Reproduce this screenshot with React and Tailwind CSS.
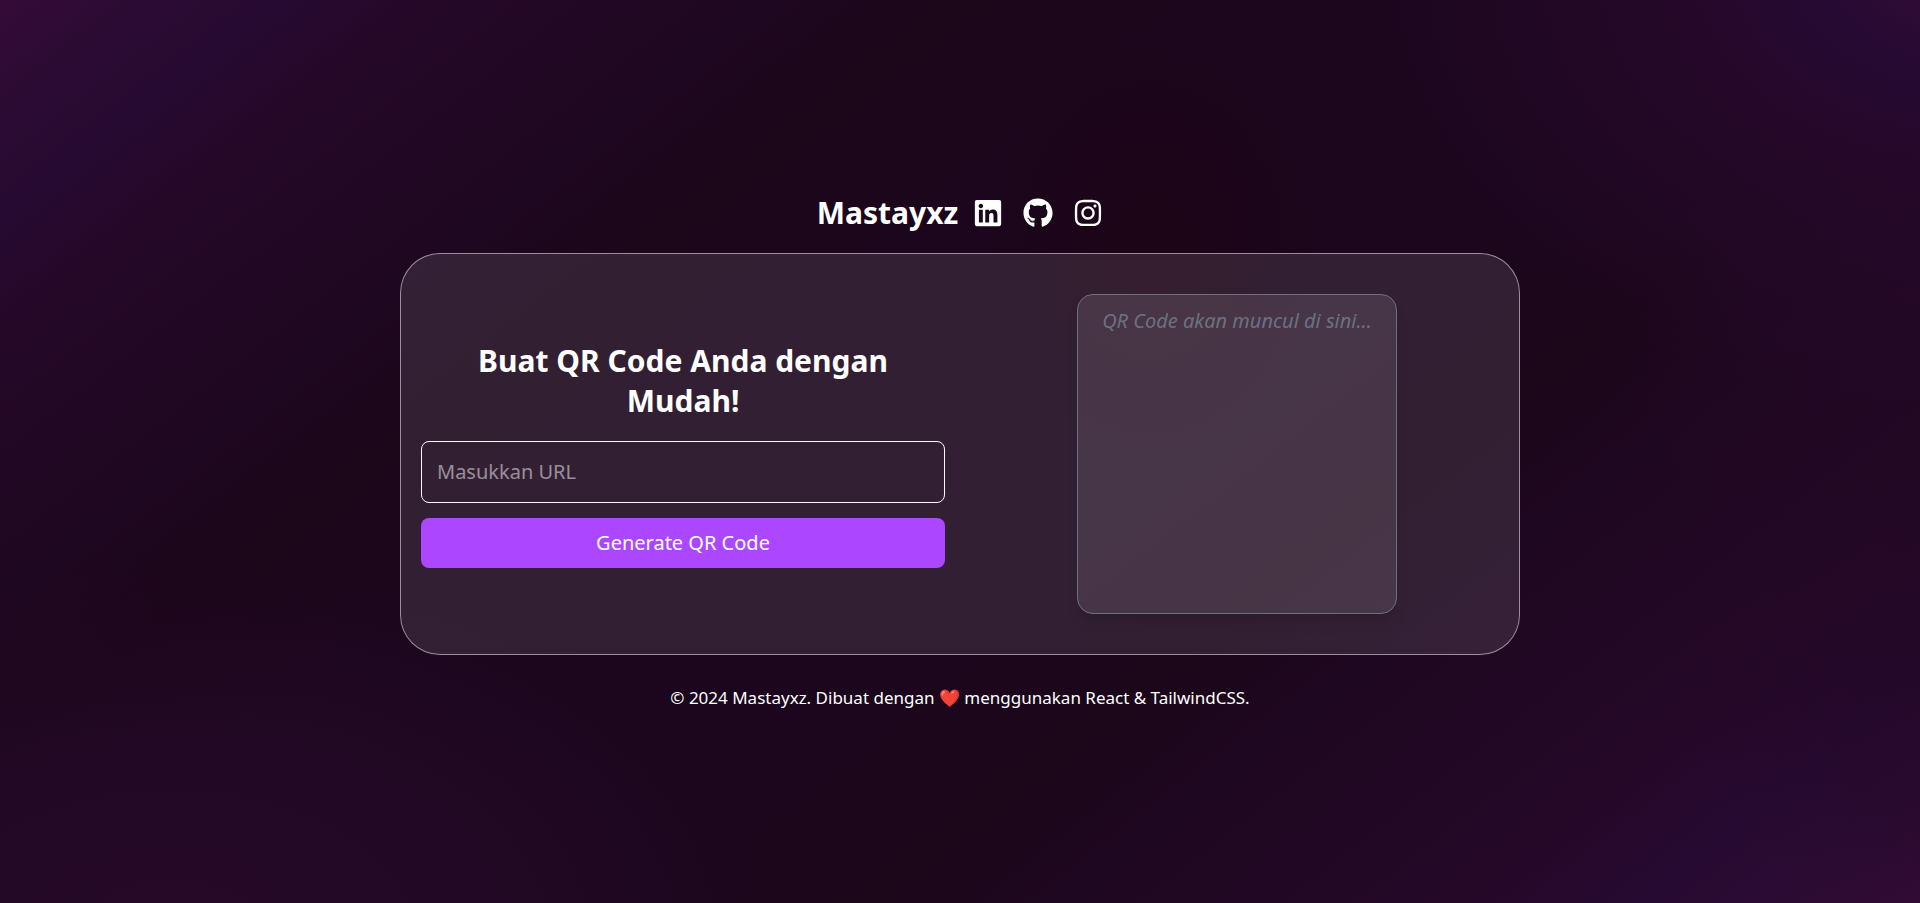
import { FaLinkedin, FaGithub, FaInstagram } from "react-icons/fa";

const socials = [
  { label: "LinkedIn", href: "#linkedin", Icon: FaLinkedin },
  { label: "GitHub", href: "#github", Icon: FaGithub },
  { label: "Instagram", href: "#instagram", Icon: FaInstagram },
];

const backdrop =
  "bg-[#1b061c] bg-[radial-gradient(ellipse_9%_24%_at_60%_27%,#1d0518_20%,#1d051800),radial-gradient(ellipse_32%_42%_at_9%_104%,#260a28,#230825_40%,#1f072200),radial-gradient(ellipse_32%_50%_at_102%_-4%,#330b36,#270a33_22%,#250829_45%,#1f072200),radial-gradient(ellipse_20%_70%_at_104%_40%,#220723,#1f072200),linear-gradient(142deg,#350b38_0%,#2c0b33_4%,#270a31_9%,#250828_14%,#210723_20%,#1e0720_25%,#1b061a_31%,#1b061d_40%,#1b061d_58%,#1b061a_66%,#1e0720_72%,#210723_78%,#250828_85%,#270a31_91%,#2c0b33_96%,#330b36_100%)]";

function Header() {
  return (
    <header className="flex items-center gap-[15px]">
      <h1 className="text-[30px] leading-[40px] font-bold">Mastayxz</h1>
      <nav className="flex items-center gap-5">
        {socials.map(({ label, href, Icon }) => (
          <a key={label} href={href} aria-label={label}>
            <Icon className="size-[30px]" />
          </a>
        ))}
      </nav>
    </header>
  );
}

function UrlForm() {
  return (
    <form className="flex flex-col" onSubmit={(e) => e.preventDefault()}>
      <h2 className="mb-5 text-center text-[30px] leading-[40px] font-bold">
        Buat QR Code Anda dengan Mudah!
      </h2>
      <input
        type="url"
        aria-label="Masukkan URL"
        placeholder="Masukkan URL"
        className="h-[62px] w-full rounded-lg border border-white px-[15px] text-xl placeholder:text-white/50"
      />
      <button className="mt-[15px] h-[50px] w-full rounded-lg bg-[#ad46ff] text-xl">
        Generate QR Code
      </button>
    </form>
  );
}

function QrPreview() {
  return (
    <div className="mx-auto h-80 w-80 rounded-2xl border border-[#6a7282] bg-white/10 p-3 text-center shadow-lg">
      <p className="text-xl text-[#6a7282] italic">QR Code akan muncul di sini...</p>
    </div>
  );
}

export default function App() {
  return (
    <div
      className={`flex min-h-screen flex-col items-center justify-center font-['Noto_Sans',sans-serif] text-white ${backdrop}`}
    >
      <Header />
      <main className="mt-5 grid w-7/12 grid-cols-2 items-center gap-[30px] rounded-[40px] border border-white/50 bg-white/10 px-5 py-10">
        <UrlForm />
        <QrPreview />
      </main>
      <footer className="mt-[30px] text-[17px] leading-[25px]">
        <p>© 2024 Mastayxz. Dibuat dengan ❤️ menggunakan React &amp; TailwindCSS.</p>
      </footer>
    </div>
  );
}
